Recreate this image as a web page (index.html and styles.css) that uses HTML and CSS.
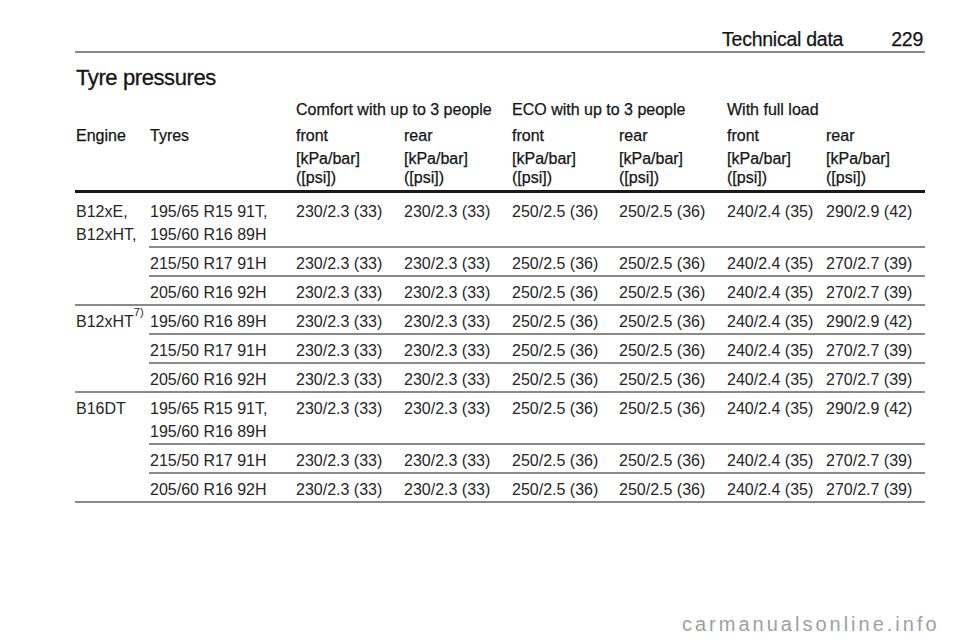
FILE: index.html
```html
<!DOCTYPE html>
<html lang="en">
<head>
<meta charset="utf-8">
<title>Technical data 229</title>
<link rel="stylesheet" href="styles.css">
</head>
<body>
<div class="page">
  <header class="running-head">
    <span class="section">Technical data</span>
    <span class="folio">229</span>
  </header>
  <h1 class="title">Tyre pressures</h1>
  <table class="tyres">
    <colgroup>
      <col class="c-engine"><col class="c-tyres">
      <col class="c-val"><col class="c-val"><col class="c-val3"><col class="c-val">
      <col class="c-val5"><col class="c-val6">
    </colgroup>
    <thead>
      <tr class="grp">
        <th></th><th></th>
        <th colspan="2">Comfort with up to 3 people</th>
        <th colspan="2">ECO with up to 3 people</th>
        <th colspan="2">With full load</th>
      </tr>
      <tr class="dir">
        <th>Engine</th><th>Tyres</th>
        <th>front</th><th>rear</th><th>front</th><th>rear</th><th>front</th><th>rear</th>
      </tr>
      <tr class="unit">
        <th></th><th></th>
        <th>[kPa/bar]<br>([psi])</th><th>[kPa/bar]<br>([psi])</th>
        <th>[kPa/bar]<br>([psi])</th><th>[kPa/bar]<br>([psi])</th>
        <th>[kPa/bar]<br>([psi])</th><th>[kPa/bar]<br>([psi])</th>
      </tr>
    </thead>
    <tbody>
      <tr class="first">
        <td rowspan="3">B12xE,<br>B12xHT,</td>
        <td>195/65 R15 91T,<br>195/60 R16 89H</td>
        <td>230/2.3 (33)</td><td>230/2.3 (33)</td><td>250/2.5 (36)</td><td>250/2.5 (36)</td><td>240/2.4 (35)</td><td>290/2.9 (42)</td>
      </tr>
      <tr>
        <td>215/50 R17 91H</td>
        <td>230/2.3 (33)</td><td>230/2.3 (33)</td><td>250/2.5 (36)</td><td>250/2.5 (36)</td><td>240/2.4 (35)</td><td>270/2.7 (39)</td>
      </tr>
      <tr>
        <td>205/60 R16 92H</td>
        <td>230/2.3 (33)</td><td>230/2.3 (33)</td><td>250/2.5 (36)</td><td>250/2.5 (36)</td><td>240/2.4 (35)</td><td>270/2.7 (39)</td>
      </tr>
      <tr>
        <td rowspan="3">B12xHT<sup class="fn">7)</sup></td>
        <td>195/60 R16 89H</td>
        <td>230/2.3 (33)</td><td>230/2.3 (33)</td><td>250/2.5 (36)</td><td>250/2.5 (36)</td><td>240/2.4 (35)</td><td>290/2.9 (42)</td>
      </tr>
      <tr>
        <td>215/50 R17 91H</td>
        <td>230/2.3 (33)</td><td>230/2.3 (33)</td><td>250/2.5 (36)</td><td>250/2.5 (36)</td><td>240/2.4 (35)</td><td>270/2.7 (39)</td>
      </tr>
      <tr>
        <td>205/60 R16 92H</td>
        <td>230/2.3 (33)</td><td>230/2.3 (33)</td><td>250/2.5 (36)</td><td>250/2.5 (36)</td><td>240/2.4 (35)</td><td>270/2.7 (39)</td>
      </tr>
      <tr>
        <td rowspan="3">B16DT</td>
        <td>195/65 R15 91T,<br>195/60 R16 89H</td>
        <td>230/2.3 (33)</td><td>230/2.3 (33)</td><td>250/2.5 (36)</td><td>250/2.5 (36)</td><td>240/2.4 (35)</td><td>290/2.9 (42)</td>
      </tr>
      <tr>
        <td>215/50 R17 91H</td>
        <td>230/2.3 (33)</td><td>230/2.3 (33)</td><td>250/2.5 (36)</td><td>250/2.5 (36)</td><td>240/2.4 (35)</td><td>270/2.7 (39)</td>
      </tr>
      <tr>
        <td>205/60 R16 92H</td>
        <td>230/2.3 (33)</td><td>230/2.3 (33)</td><td>250/2.5 (36)</td><td>250/2.5 (36)</td><td>240/2.4 (35)</td><td>270/2.7 (39)</td>
      </tr>
    </tbody>
  </table>
  <div class="watermark">carmanualsonline.info</div>
</div>
</body>
</html>
```

FILE: styles.css
```css
html, body {
  margin: 0;
  padding: 0;
  background: #ffffff;
}

body {
  font-family: "Liberation Sans", Arial, sans-serif;
  color: #262626;
}

.page {
  position: relative;
  width: 960px;
  height: 642px;
  box-sizing: border-box;
  padding: 0 35px 0 75px;
}

.running-head {
  display: flex;
  justify-content: flex-end;
  gap: 48px;
  padding-top: 27px;
  padding-right: 2px;
  font-size: 19.5px;
  line-height: 24px;
  letter-spacing: -0.25px;
  color: #151515;
  -webkit-text-stroke: 0.25px #151515;
  border-bottom: 2px solid #8a8a8a;
}

.title {
  margin: 12px 0 0 1px;
  font-size: 22px;
  line-height: 26px;
  font-weight: normal;
  letter-spacing: -0.4px;
  color: #151515;
  -webkit-text-stroke: 0.3px #151515;
}

.tyres {
  margin-top: 6px;
  width: 850px;
  table-layout: fixed;
  border-collapse: collapse;
  font-size: 16px;
}

.c-engine { width: 74px; }
.c-tyres { width: 146px; }
.c-val { width: 108px; }
.c-val3 { width: 107px; }
.c-val5 { width: 99px; }
.c-val6 { width: 100px; }

.tyres th {
  padding: 0 0 0 1px;
  text-align: left;
  vertical-align: top;
  font-weight: normal;
  white-space: nowrap;
  color: #151515;
  -webkit-text-stroke: 0.25px #151515;
}

.tyres .grp th,
.tyres .dir th {
  height: 26px;
  line-height: 26px;
}

.tyres .unit th {
  line-height: 19px;
  padding-bottom: 3px;
  border-bottom: 3px solid #1a1a1a;
}

.tyres td {
  padding: 4px 0 0 1px;
  line-height: 23px;
  vertical-align: top;
  white-space: nowrap;
  border-bottom: 2px solid #8a8a8a;
}

.tyres .first td {
  padding-top: 7px;
}

.fn {
  font-size: 11px;
  line-height: 0;
  vertical-align: 11px;
}

.watermark {
  position: absolute;
  left: 682px;
  top: 614px;
  font-size: 20px;
  line-height: 20px;
  letter-spacing: 3px;
  color: #a0a0a0;
}
```
